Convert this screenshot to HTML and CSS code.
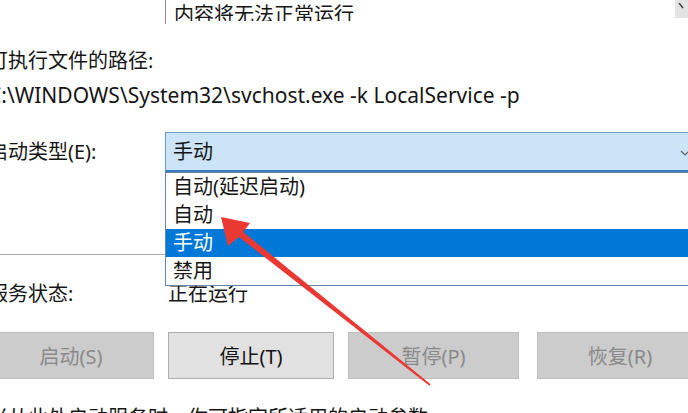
FILE: index.html
```html
<!DOCTYPE html>
<html lang="zh-CN">
<head>
    <meta charset="UTF-8">
    <meta name="viewport" content="width=device-width, initial-scale=1.0">
    <title>服务属性</title>
    <link rel="stylesheet" href="styles.css">
</head>
<body>

    <div class="page">
        <!-- description box, scrolled to its last line -->
        <div class="desc">
            <div class="desc-text">内容将无法正常运行</div>
            <div class="desc-scroll">
                <svg width="13" height="18" viewBox="0 0 13 18"><path d="M4 0 L8 5" stroke="#444" stroke-width="1.6" fill="none"/></svg>
            </div>
        </div>

        <p class="label path-label">可执行文件的路径:</p>
        <p class="path">C:\WINDOWS\System32\svchost.exe -k LocalService -p</p>

        <div class="row startup">
            <span class="row-label">启动类型(E):</span>
            <div class="combo">
                <span class="combo-value">手动</span>
                <svg class="combo-arrow" width="10" height="6" viewBox="0 0 10 6"><path d="M1 1 L5 5 L9 1" stroke="#606060" stroke-width="1.2" fill="none"/></svg>
                <ul class="combo-list">
                    <li>自动(延迟启动)</li>
                    <li>自动</li>
                    <li class="selected">手动</li>
                    <li>禁用</li>
                </ul>
            </div>
        </div>

        <hr class="sep">

        <div class="row status">
            <span class="row-label">服务状态:</span>
            <span class="status-value">正在运行</span>
        </div>

        <div class="buttons">
            <button class="btn" disabled>启动(S)</button>
            <button class="btn btn-active">停止(T)</button>
            <button class="btn" disabled>暂停(P)</button>
            <button class="btn btn-resume" disabled>恢复(R)</button>
        </div>

        <p class="label note">当从此处启动服务时，你可指定所适用的启动参数。</p>
    </div>

    <!-- red annotation arrow pointing at "自动" -->
    <svg class="arrow" width="688" height="413" viewBox="0 0 688 413">
        <polygon fill="#ea3833" points="221,217 250,223 243.2,232 430.6,384.2 429.4,385.8 238.9,237 228,246"/>
    </svg>

</body>
</html>
```

FILE: styles.css
```css
body {
    margin: 0;
    width: 688px;
    height: 413px;
    overflow: hidden;
    position: relative;
    background: #fff;
    color: #151515;
    font-family: "Noto Sans", "Noto Sans CJK SC", sans-serif;
    font-size: 20px;
}
.page {
    margin-left: -12px;
}
p { margin: 0; }

/* Description box */
.desc {
    display: flex;
    align-items: flex-start;
    height: 24px;
    margin-left: 177px;
    border-left: 1px solid #8c8c8c;
}
.desc-text {
    flex: 1;
    height: 21px;
    overflow: hidden;
    padding-left: 8px;
    line-height: 30px;
}
.desc-scroll {
    width: 13px;
    height: 18px;
    background: #e3e3e3;
}

.label, .path, .row {
    line-height: 28px;
    height: 28px;
}
.path-label { margin-top: 23px; }
.path {
    margin-top: 6px;
    font-size: 21px;
}

.row {
    display: flex;
    align-items: center;
}
.row-label {
    width: 177px;
    flex-shrink: 0;
}

/* Startup type combo, open */
.startup {
    margin-top: 23px;
    height: 40px;
}
.combo {
    position: relative;
    flex-shrink: 0;
    width: 528px;
    height: 37px;
    display: flex;
    align-items: center;
    background: #cce4f7;
    border: 1px solid #6f9bc4;
    border-bottom: 2px solid #3b7bbd;
}
.combo-value { padding-left: 7px; }
.combo-arrow {
    position: absolute;
    right: 4px;
    top: 17px;
}
.combo-list {
    position: absolute;
    top: 39px;
    left: -1px;
    right: -1px;
    margin: 0;
    padding: 0;
    list-style: none;
    background: #fff;
    border: 1px solid #6486aa;
    z-index: 2;
}
.combo-list li {
    height: 28px;
    line-height: 28px;
    padding-left: 7px;
}
.combo-list li.selected {
    background: #0078d7;
    color: #fff;
}

.sep {
    margin: 82px 0 0;
    border: none;
    border-top: 1px solid #a8a8a8;
}

.status { margin-top: 25px; }
.status-value { padding-left: 3px; }

/* Buttons */
.buttons {
    display: grid;
    grid-template-columns: 166px 166px 171px 170px;
    column-gap: 14px;
    margin-top: 24px;
}
.btn {
    height: 47px;
    font-family: inherit;
    font-size: 20px;
    background: #cccccc;
    color: #8a8a8a;
    border: 1px solid #bfbfbf;
    padding: 0;
}
.btn-active {
    background: #e1e1e1;
    color: #111;
    border-color: #adadad;
}
.btn-resume { margin-left: 4px; }

.note { margin-top: 25px; }

.arrow {
    position: absolute;
    left: 0;
    top: 0;
    z-index: 5;
}
```
